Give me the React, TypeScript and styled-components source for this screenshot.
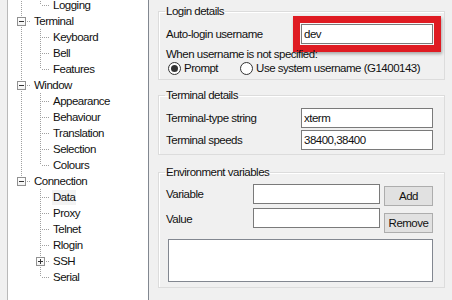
import styled, { createGlobalStyle } from "styled-components";

const GlobalStyle = createGlobalStyle`
	html, body {
		margin: 0;
		padding: 0;
		background: #f0f0f0;
	}
	body {
		font-family: "Liberation Sans", Arial, sans-serif;
		font-size: 11.5px;
		letter-spacing: -0.5px;
		color: #111;
	}
`;

const Window = styled.div`
	width: 452px;
	height: 300px;
	display: flex;
	overflow: hidden;
	background: #f0f0f0;
`;

// ---- category tree ----

const TreePanel = styled.div`
	width: 140px;
	margin-left: 7px;
	flex-shrink: 0;
	background: #fff;
	border-left: 1px solid #b9b9b9;
	border-right: 1px solid #828790;
	overflow: hidden;
`;

const TreeList = styled.div`
	margin-top: -3px;
	margin-left: 4px;
`;

const Row = styled.div`
	display: flex;
	height: 16px;
	align-items: center;
`;

const Guide = styled.span<{ $vert: "none" | "full" | "top"; $horiz?: boolean }>`
	position: relative;
	width: 19px;
	height: 16px;
	flex-shrink: 0;

	&::before {
		content: "";
		display: ${(p) => (p.$vert === "none" ? "none" : "block")};
		position: absolute;
		left: 9px;
		top: 0;
		width: 1px;
		height: ${(p) => (p.$vert === "top" ? "8px" : "16px")};
		background: repeating-linear-gradient(to bottom, #a0a0a0 0 1px, transparent 1px 2px);
	}

	&::after {
		content: "";
		display: ${(p) => (p.$horiz ? "block" : "none")};
		position: absolute;
		left: 10px;
		top: 8px;
		width: 9px;
		height: 1px;
		background: repeating-linear-gradient(to right, transparent 0 1px, #a0a0a0 1px 2px);
	}
`;

const Expander = styled.span<{ $open: boolean }>`
	position: absolute;
	left: 5px;
	top: 4px;
	width: 7px;
	height: 7px;
	border: 1px solid #919191;
	background: linear-gradient(#fff, #f3f3f3);
	z-index: 1;

	&::before {
		content: "";
		position: absolute;
		left: 1px;
		top: 3px;
		width: 5px;
		height: 1px;
		background: #333;
	}

	&::after {
		content: "";
		display: ${(p) => (p.$open ? "none" : "block")};
		position: absolute;
		left: 3px;
		top: 1px;
		width: 1px;
		height: 5px;
		background: #333;
	}
`;

const NodeLabel = styled.span<{ $selected?: boolean }>`
	margin-left: 2px;
	padding: 0 1px;
	line-height: 15px;
	white-space: nowrap;
	background: ${(p) => (p.$selected ? "#f3f3f3" : "transparent")};
`;

type Node = { label: string; children?: Node[]; open?: boolean };

const tree: Node[] = [
	{ label: "Session", open: true, children: [{ label: "Logging" }] },
	{
		label: "Terminal",
		open: true,
		children: [{ label: "Keyboard" }, { label: "Bell" }, { label: "Features" }],
	},
	{
		label: "Window",
		open: true,
		children: [
			{ label: "Appearance" },
			{ label: "Behaviour" },
			{ label: "Translation" },
			{ label: "Selection" },
			{ label: "Colours" },
		],
	},
	{
		label: "Connection",
		open: true,
		children: [
			{ label: "Data" },
			{ label: "Proxy" },
			{ label: "Telnet" },
			{ label: "Rlogin" },
			{ label: "SSH", children: [{ label: "Kex" }] },
			{ label: "Serial" },
		],
	},
];

type FlatRow = { node: Node; depth: number; lastPath: boolean[] };

const flatten = (nodes: Node[], depth: number, lastPath: boolean[], out: FlatRow[]) => {
	nodes.forEach((n, i) => {
		const path = [...lastPath, i === nodes.length - 1];
		out.push({ node: n, depth, lastPath: path });
		if (n.children && n.open) flatten(n.children, depth + 1, path, out);
	});
	return out;
};

// Session row itself is scrolled out of view
const rows = flatten(tree, 0, [], []).slice(1);

const Tree = () => (
	<TreePanel>
		<TreeList>
			{rows.map((r) => (
				<Row key={r.node.label}>
					{r.lastPath.map((last, i) => {
						const own = i === r.depth;
						const vert = own ? (last ? "top" : "full") : last ? "none" : "full";
						return (
							<Guide key={i} $vert={vert} $horiz={own}>
								{own && r.node.children && <Expander $open={!!r.node.open} />}
							</Guide>
						);
					})}
					<NodeLabel $selected={r.node.label === "Data"}>{r.node.label}</NodeLabel>
				</Row>
			))}
		</TreeList>
	</TreePanel>
);

// ---- settings page ----

const Settings = styled.div`
	flex: 1;
	display: flex;
	flex-direction: column;
	padding: 4px 8px 0 9px;
`;

const Group = styled.fieldset<{ $gap?: number }>`
	margin: 0 0 ${(p) => p.$gap ?? 8}px;
	padding: 0 11px 4px 7px;
	min-width: 0;
	border: 1px solid #dcdcdc;
	box-shadow: inset 1px 1px 0 #fff;
`;

const Legend = styled.legend`
	padding: 0 1px;
	margin-left: -1px;
	line-height: 15px;
	height: 15px;
`;

const FieldRow = styled.div<{ $top?: number }>`
	display: flex;
	align-items: center;
	justify-content: space-between;
	height: 20px;
	margin-top: ${(p) => p.$top ?? 0}px;
`;

const Label = styled.span<{ $shift?: number }>`
	white-space: nowrap;
	line-height: 15px;
	margin-top: ${(p) => p.$shift ?? 0}px;
`;

const TextBox = styled.input<{ $width: number }>`
	box-sizing: border-box;
	width: ${(p) => p.$width}px;
	height: 20px;
	margin: 0;
	padding: 0 2px;
	border: 1px solid #7a7a7a;
	background: #fff;
	font: inherit;
	letter-spacing: inherit;
	color: #111;
	outline: none;
`;

const Highlighted = styled(TextBox)`
	box-shadow:
		0 0 0 1px #f6f6f6,
		0 0 0 8px #df1b22,
		1px 2px 3px 8px rgba(0, 0, 0, 0.3);
`;

const Note = styled.div`
	margin-top: 3px;
	height: 15px;
	line-height: 15px;
`;

const RadioRow = styled.div`
	display: flex;
	align-items: center;
	gap: 20px;
	height: 14px;
	margin-top: -1px;
`;

const RadioOption = styled.label`
	display: flex;
	align-items: center;
	gap: 3px;
	line-height: 14px;
	white-space: nowrap;
`;

const RadioCircle = styled.span<{ $checked?: boolean }>`
	position: relative;
	box-sizing: border-box;
	width: 13px;
	height: 13px;
	border-radius: 50%;
	border: 1px solid #333;
	background: #fff;
	margin-left: 2px;

	&::after {
		content: "";
		display: ${(p) => (p.$checked ? "block" : "none")};
		position: absolute;
		left: 2px;
		top: 2px;
		width: 7px;
		height: 7px;
		border-radius: 50%;
		background: #333;
	}
`;

const EnvTop = styled.div`
	display: flex;
	margin-top: 4px;
`;

const EnvFields = styled.div`
	display: flex;
	flex-direction: column;
	gap: 4px;
`;

const EnvRow = styled.div`
	display: flex;
	align-items: center;
	justify-content: space-between;
	width: 214px;
	height: 20px;
`;

const ButtonColumn = styled.div`
	display: flex;
	flex-direction: column;
	gap: 7px;
	padding-top: 2px;
	margin-left: 4px;
`;

const Button = styled.button`
	box-sizing: border-box;
	width: 49px;
	height: 20px;
	margin: 0;
	padding: 0;
	border: 1px solid #adadad;
	background: #e1e1e1;
	font: inherit;
	letter-spacing: inherit;
	color: #111;
`;

const ListBox = styled.div`
	box-sizing: border-box;
	height: 43px;
	margin: 6px 0 1px 2px;
	border: 1px solid #828790;
	background: #fff;
`;

export default function App() {
	return (
		<>
			<GlobalStyle />
			<Window>
				<Tree />
				<Settings>
					<Group $gap={8}>
						<Legend>Login details</Legend>
						<FieldRow $top={5}>
							<Label>Auto-login username</Label>
							<Highlighted $width={132} value="dev" readOnly />
						</FieldRow>
						<Note>When username is not specified:</Note>
						<RadioRow>
							<RadioOption>
								<RadioCircle $checked />
								Prompt
							</RadioOption>
							<RadioOption>
								<RadioCircle />
								Use system username (G1400143)
							</RadioOption>
						</RadioRow>
					</Group>
					<Group $gap={10}>
						<Legend>Terminal details</Legend>
						<FieldRow $top={5}>
							<Label>Terminal-type string</Label>
							<TextBox $width={132} value="xterm" readOnly />
						</FieldRow>
						<FieldRow $top={2}>
							<Label>Terminal speeds</Label>
							<TextBox $width={132} value="38400,38400" readOnly />
						</FieldRow>
					</Group>
					<Group $gap={0}>
						<Legend>Environment variables</Legend>
						<EnvTop>
							<EnvFields>
								<EnvRow>
									<Label>Variable</Label>
									<TextBox $width={127} value="" readOnly />
								</EnvRow>
								<EnvRow>
									<Label $shift={3}>Value</Label>
									<TextBox $width={127} value="" readOnly />
								</EnvRow>
							</EnvFields>
							<ButtonColumn>
								<Button>Add</Button>
								<Button>Remove</Button>
							</ButtonColumn>
						</EnvTop>
						<ListBox />
					</Group>
				</Settings>
			</Window>
		</>
	);
}
